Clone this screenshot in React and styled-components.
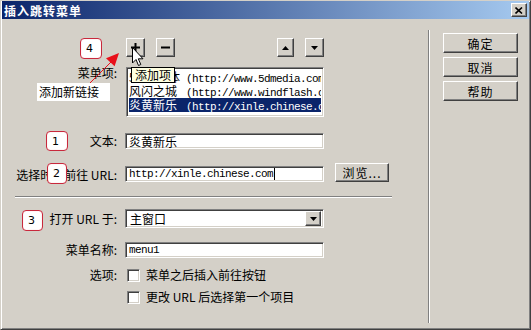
import React from "react";
import styled, { createGlobalStyle, css } from "styled-components";

const FONT = `"Noto Sans CJK SC", "Liberation Sans", sans-serif`;
const MONO = `"Liberation Mono", "DejaVu Sans Mono", monospace`;

const GlobalStyle = createGlobalStyle`
  body {
    margin: 0;
    background: #d4d0c8;
    font-family: ${FONT};
  }
  * {
    box-sizing: border-box;
  }
`;

const raised = css`
  background: #d4d0c8;
  border: 1px solid;
  border-color: #fff #404040 #404040 #fff;
  box-shadow: inset -1px -1px #808080;
`;

const sunken = css`
  background: #fff;
  border: 1px solid;
  border-color: #808080 #fff #fff #808080;
  box-shadow: inset 1px 1px #404040, inset -1px -1px #d4d0c8;
`;

const items = [
  { name: "5D多媒体", url: "(http://www.5dmedia.com)" },
  { name: "风闪之城", url: "(http://www.windflash.com)" },
  { name: "炎黄新乐", url: "(http://xinle.chinese.com)", selected: true },
];

function Plus() {
  return (
    <svg width="9" height="9" viewBox="0 0 9 9">
      <rect x="3.5" y="0" width="2" height="9" fill="#000" />
      <rect x="0" y="3.5" width="9" height="2" fill="#000" />
    </svg>
  );
}

function Minus() {
  return (
    <svg width="9" height="9" viewBox="0 0 9 9">
      <rect x="0" y="3.5" width="9" height="2" fill="#000" />
    </svg>
  );
}

function Tri({ up }) {
  return (
    <svg width="7" height="4" viewBox="0 0 7 4">
      <polygon points={up ? "0,4 7,4 3.5,0" : "0,0 7,0 3.5,4"} fill="#000" />
    </svg>
  );
}

function App() {
  return (
    <>
      <GlobalStyle />
      <Window>
        <TitleBar>
          <Title>插入跳转菜单</Title>
          <CloseButton>
            <svg width="8" height="7" viewBox="0 0 8 7">
              <path d="M0.5 0.5 L7 6.5 M7 0.5 L0.5 6.5" stroke="#000" strokeWidth="1.6" />
            </svg>
          </CloseButton>
        </TitleBar>

        <Body>
          <Panel>
            <Row $mt={19}>
              <Label />
              <Tools>
                <ToolGroup>
                  <ToolButton><Plus /></ToolButton>
                  <ToolButton><Minus /></ToolButton>
                </ToolGroup>
                <ToolGroup>
                  <ToolButton $narrow><Tri up /></ToolButton>
                  <ToolButton><Tri /></ToolButton>
                </ToolGroup>
              </Tools>
            </Row>

            <Row $mt={10} $top>
              <Label $top>菜单项:</Label>
              <ListBox>
                {items.map((it, i) => (
                  <ListItem key={i} $selected={it.selected}>
                    <ItemName>{it.name}</ItemName>
                    <ItemUrl>{it.url}</ItemUrl>
                  </ListItem>
                ))}
              </ListBox>
            </Row>

            <Row $mt={16}>
              <Label>文本:</Label>
              <TextField>炎黄新乐</TextField>
            </Row>

            <Row $mt={14} $bottom>
              <Label>选择时，前往 URL:</Label>
              <TextField $mono>
                http://xinle.chinese.com
                <Caret />
              </TextField>
              <BrowseButton>浏览...</BrowseButton>
            </Row>

            <Separator />

            <Row $mt={11}>
              <Label>打开 URL 于:</Label>
              <Select>
                <SelectValue>主窗口</SelectValue>
                <DropButton><Tri /></DropButton>
              </Select>
            </Row>

            <Row $mt={14}>
              <Label>菜单名称:</Label>
              <TextField $mono>menu1</TextField>
            </Row>

            <Row $mt={10}>
              <Label>选项:</Label>
              <Check />
              <CheckText>菜单之后插入前往按钮</CheckText>
            </Row>

            <Row $mt={8}>
              <Label />
              <Check />
              <CheckText>更改 URL 后选择第一个项目</CheckText>
            </Row>
          </Panel>

          <SideLine />

          <SideColumn>
            <DialogButton>确定</DialogButton>
            <DialogButton>取消</DialogButton>
            <DialogButton>帮助</DialogButton>
          </SideColumn>
        </Body>

        <Marker $x={79} $y={37} $w={22} $h={21}>4</Marker>
        <Marker $x={45} $y={130} $w={22} $h={20}>1</Marker>
        <Marker $x={46} $y={162} $w={20} $h={21}>2</Marker>
        <Marker $x={21} $y={209} $w={21} $h={21}>3</Marker>

        <Arrow width="46" height="42" viewBox="0 0 46 42">
          <line x1="9" y1="36" x2="32" y2="13" stroke="#e8101a" strokeWidth="1" />
          <polygon points="40,4 35.6,17.2 27,9.2" fill="#e8101a" />
        </Arrow>

        <Callout>添加新链接</Callout>
        <Tooltip>添加项</Tooltip>

        <Cursor width="12" height="20" viewBox="0 0 12 20">
          <polygon
            points="0.5,0.5 0.5,16 4,12.5 6.5,18.5 8.8,17.5 6.3,11.8 11,11.8"
            fill="#fff"
            stroke="#000"
            strokeWidth="1"
          />
        </Cursor>
      </Window>
    </>
  );
}

export default App;

const Window = styled.div`
  position: relative;
  width: 531px;
  height: 330px;
  display: flex;
  flex-direction: column;
  padding: 0 2px 2px 2px;
  background: #d4d0c8;
  border: 1px solid;
  border-color: #d4d0c8 #404040 #404040 #d4d0c8;
  box-shadow: inset 1px 1px #fff, inset -1px -1px #808080;
  font-family: ${FONT};
  font-size: 12px;
  color: #000;
  overflow: hidden;
`;

const TitleBar = styled.div`
  height: 18px;
  margin: 0 -1px;
  display: flex;
  align-items: center;
  justify-content: space-between;
  background: linear-gradient(to right, #0a246a, #a6caf0);
`;

const Title = styled.span`
  padding-left: 2px;
  color: #fff;
  font-weight: bold;
  font-size: 12px;
  letter-spacing: 1px;
`;

const CloseButton = styled.div`
  ${raised};
  width: 16px;
  height: 14px;
  margin-right: 2px;
  display: flex;
  align-items: center;
  justify-content: center;
`;

const Body = styled.div`
  flex: 1;
  display: flex;
`;

const Panel = styled.div`
  width: 425px;
  display: flex;
  flex-direction: column;
`;

const Row = styled.div`
  display: flex;
  align-items: ${(p) => (p.$top ? "flex-start" : p.$bottom ? "flex-end" : "center")};
  margin-top: ${(p) => p.$mt}px;
`;

const Label = styled.div`
  width: 114px;
  margin-right: 8px;
  text-align: right;
  white-space: nowrap;
  line-height: 14px;
  margin-top: ${(p) => (p.$top ? "-1px" : "0")};
`;

const Tools = styled.div`
  width: 198px;
  margin-left: 1px;
  display: flex;
  justify-content: space-between;
`;

const ToolGroup = styled.div`
  display: flex;
  gap: 11px;
`;

const ToolButton = styled.div`
  ${raised};
  width: ${(p) => (p.$narrow ? 17 : 19)}px;
  height: 19px;
  display: flex;
  align-items: center;
  justify-content: center;
`;

const ListBox = styled.div`
  ${sunken};
  width: 198px;
  height: 50px;
  margin-left: 1px;
  padding: 2px;
  overflow: hidden;
`;

const ListItem = styled.div`
  height: 14px;
  line-height: 14px;
  white-space: nowrap;
  overflow: hidden;
  background: ${(p) => (p.$selected ? "#0a246a" : "transparent")};
  color: ${(p) => (p.$selected ? "#fff" : "#000")};
`;

const ItemName = styled.span`
  display: inline-block;
  width: 57px;
`;

const ItemUrl = styled.span`
  font-family: ${MONO};
  font-size: 11px;
  letter-spacing: -0.6px;
`;

const TextField = styled.div`
  ${sunken};
  width: 199px;
  height: 16px;
  padding: 0 3px;
  display: flex;
  align-items: center;
  white-space: nowrap;
  font-family: ${(p) => (p.$mono ? MONO : FONT)};
  font-size: ${(p) => (p.$mono ? "11px" : "12px")};
  letter-spacing: ${(p) => (p.$mono ? "-0.6px" : "0")};
`;

const Caret = styled.span`
  display: inline-block;
  width: 1px;
  height: 12px;
  margin-left: 1px;
  background: #000;
`;

const BrowseButton = styled.div`
  ${raised};
  width: 54px;
  height: 19px;
  margin-left: 11px;
  display: flex;
  align-items: center;
  justify-content: center;
  letter-spacing: 1px;
`;

const Separator = styled.div`
  width: 377px;
  margin: 14px 0 0 12px;
  height: 2px;
  border-top: 1px solid #808080;
  border-bottom: 1px solid #fff;
`;

const Select = styled.div`
  ${sunken};
  width: 199px;
  height: 19px;
  padding: 2px;
  display: flex;
  align-items: center;
`;

const SelectValue = styled.span`
  flex: 1;
  padding-left: 2px;
`;

const DropButton = styled.div`
  ${raised};
  width: 16px;
  height: 15px;
  display: flex;
  align-items: center;
  justify-content: center;
`;

const Check = styled.div`
  ${sunken};
  width: 13px;
  height: 13px;
  margin-left: 2px;
`;

const CheckText = styled.span`
  margin-left: 6px;
  line-height: 14px;
`;

const SideLine = styled.div`
  width: 2px;
  margin: 11px 0 4px 0;
  border-left: 1px solid #808080;
  border-right: 1px solid #fff;
`;

const SideColumn = styled.div`
  display: flex;
  flex-direction: column;
  gap: 4px;
  padding: 14px 0 0 13px;
`;

const DialogButton = styled.div`
  ${raised};
  width: 75px;
  height: 20px;
  display: flex;
  align-items: center;
  justify-content: center;
  letter-spacing: 1px;
`;

const Marker = styled.div`
  position: absolute;
  left: ${(p) => p.$x}px;
  top: ${(p) => p.$y}px;
  width: ${(p) => p.$w}px;
  height: ${(p) => p.$h}px;
  padding-left: 5px;
  display: flex;
  align-items: center;
  background: #fff;
  border: 1px solid #c8283c;
  border-radius: 4px;
  box-shadow: inset 0 0 1px #f0a0a8;
  font-family: "DejaVu Sans", sans-serif;
  font-size: 11px;
`;

const Arrow = styled.svg`
  position: absolute;
  left: 78px;
  top: 48px;
`;

const Callout = styled.div`
  position: absolute;
  left: 36px;
  top: 82px;
  width: 73px;
  height: 18px;
  padding-left: 2px;
  line-height: 18px;
  background: #fff;
`;

const Tooltip = styled.div`
  position: absolute;
  left: 130px;
  top: 66px;
  width: 44px;
  height: 16px;
  line-height: 14px;
  padding-left: 3px;
  background: #ffffe1;
  border: 1px solid #000;
`;

const Cursor = styled.svg`
  position: absolute;
  left: 131px;
  top: 46px;
`;
